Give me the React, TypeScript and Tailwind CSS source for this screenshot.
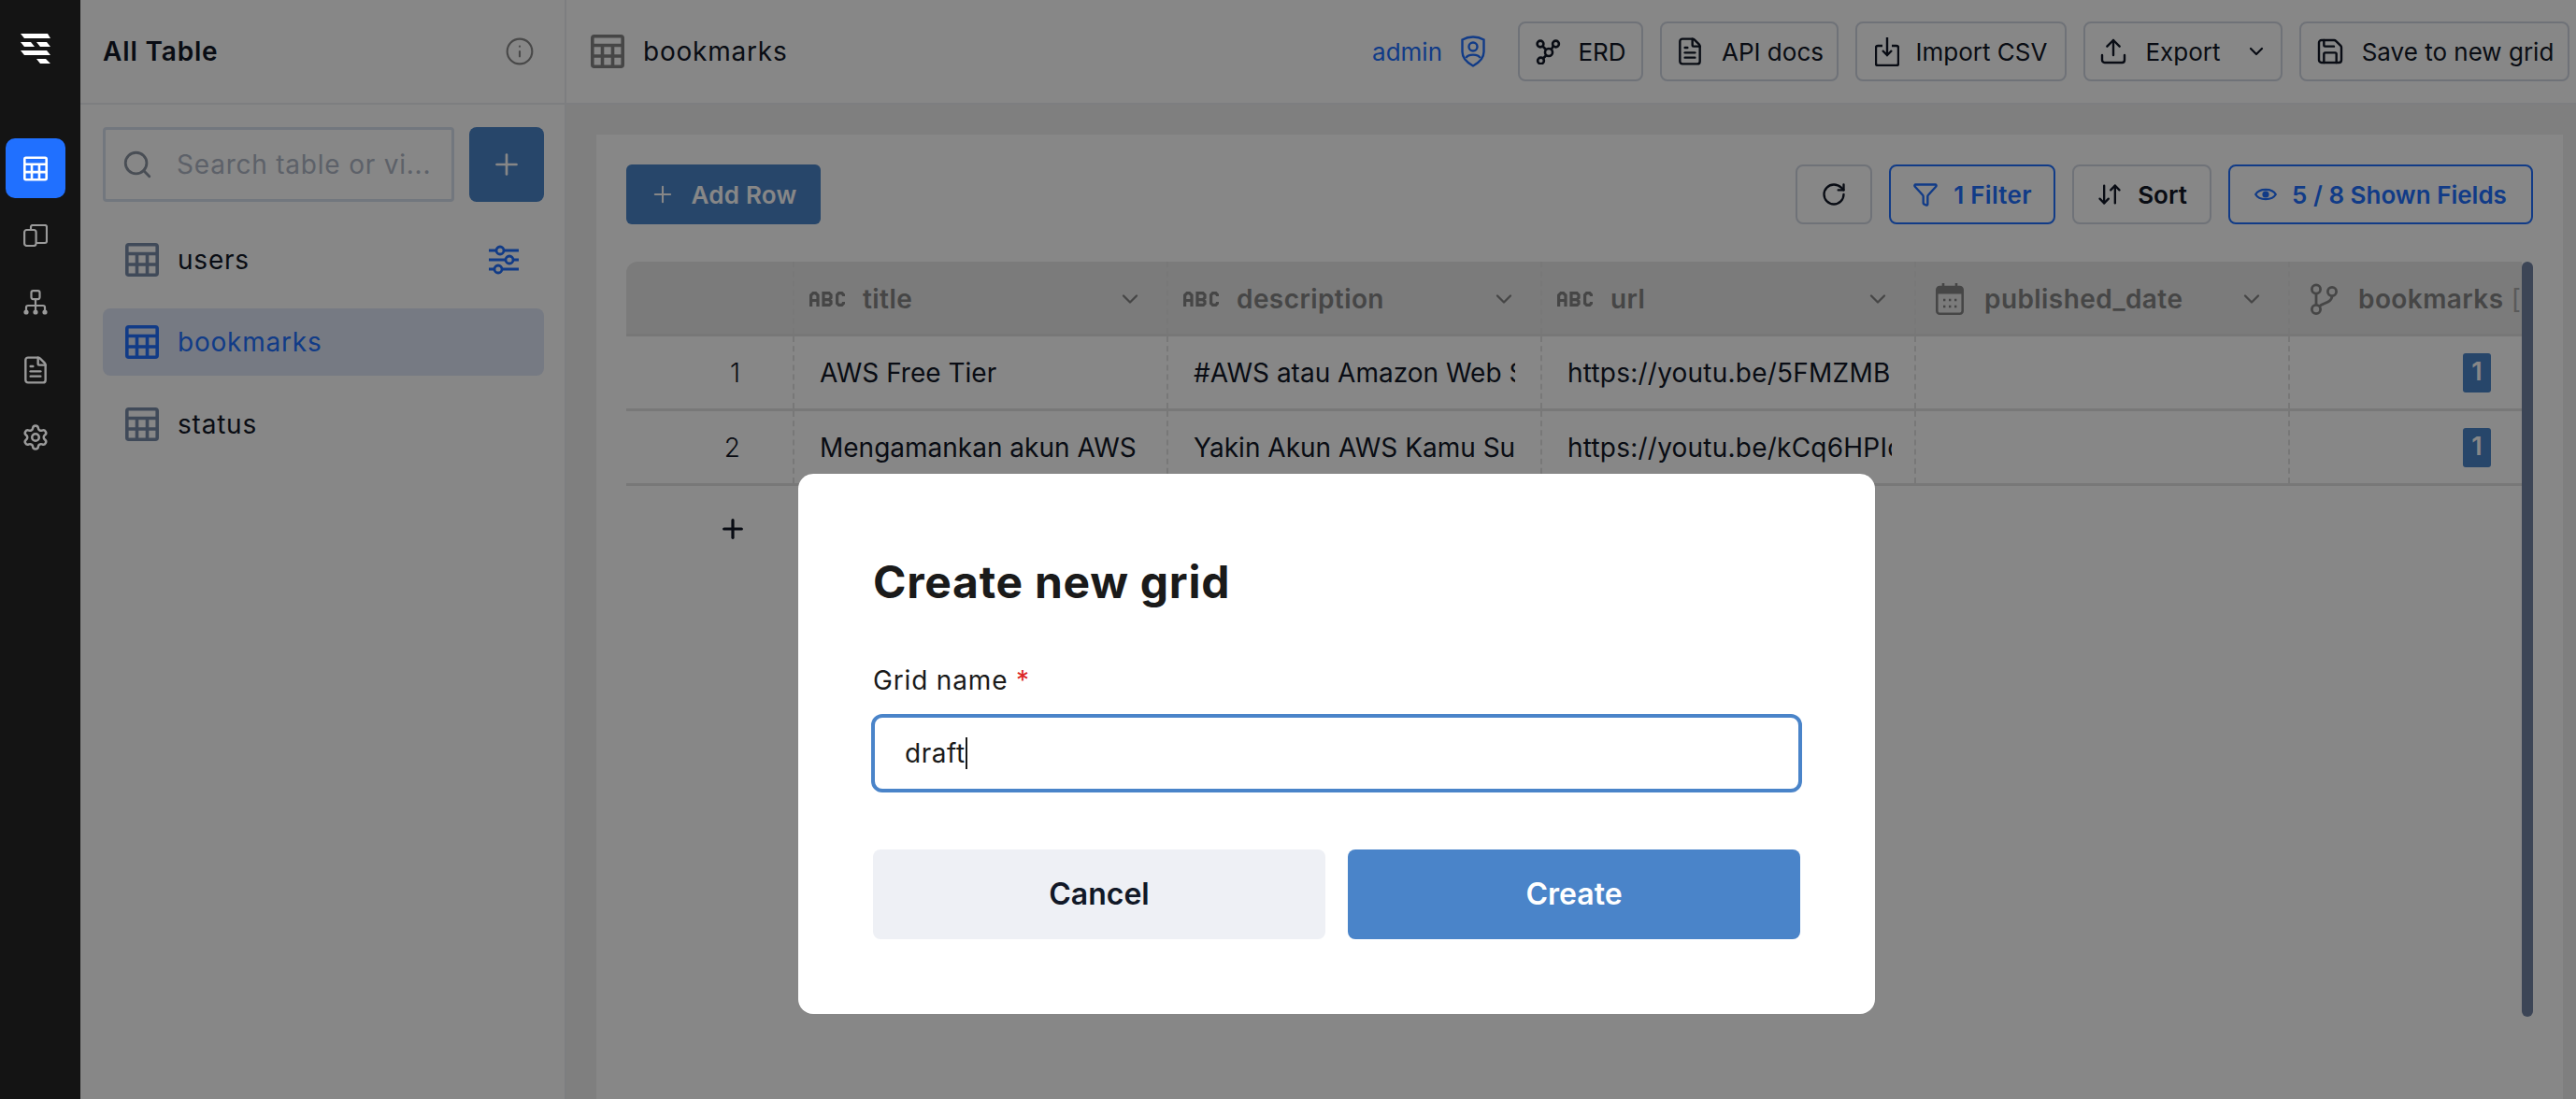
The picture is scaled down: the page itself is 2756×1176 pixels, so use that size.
import React from 'react';
import { ArrowDownUp, ChevronDown, FileText, Filter, Info, Plus, RotateCw, Save, Search, Settings, Upload } from 'lucide-react';

const FONT = 'font-[Inter,"Liberation_Sans",sans-serif]';

function TableGlyph({ className }: { className?: string }) {
  return (
    <svg viewBox="0 0 36 36" className={className} fill="none" stroke="currentColor" strokeWidth="3.6">
      <rect x="1.8" y="1.8" width="32.4" height="32.4" rx="2" />
      <path d="M1.8 11.500h32.4M1.800 23h32.400M12.500 11.500v23M23.500 11.500v23" />
    </svg>
  );
}

function LogoGlyph() {
  return (
    <svg viewBox="22 36 32 32" className="w-8 h-8" fill="white">
      <path d="M22 36H51L54 41H26ZM22 45H33L37 50H26ZM39 45H50L54 50H43ZM22 54H50L54 59H26ZM39 63H49L54 68H43Z" />
    </svg>
  );
}

function PagesGlyph() {
  return (
    <svg viewBox="0 0 26 24" className="w-[26px] h-6" fill="none" stroke="currentColor" strokeWidth="2.2">
      <rect x="1.1" y="6" width="12.5" height="17" rx="2.5" />
      <path d="M8 6V3a2 2 0 0 1 2-2h13a2 2 0 0 1 2 2v15a2 2 0 0 1-2 2h-9.4" />
    </svg>
  );
}

function TreeGlyph() {
  return (
    <svg viewBox="0 0 26 28" className="w-[26px] h-7" fill="none" stroke="currentColor" strokeWidth="2.2">
      <rect x="8.5" y="1.1" width="9" height="9" rx="2" />
      <path d="M13 10v13M3 23v-4a2 2 0 0 1 2-2h16a2 2 0 0 1 2 2v4" />
      <circle cx="3" cy="24" r="2.6" fill="currentColor" stroke="none" />
      <circle cx="13" cy="24" r="2.6" fill="currentColor" stroke="none" />
      <circle cx="23" cy="24" r="2.6" fill="currentColor" stroke="none" />
    </svg>
  );
}

function AbcGlyph() {
  return (
    <svg viewBox="0 0 38 16" className="w-[38px] h-4 shrink-0" fill="none" stroke="currentColor" strokeWidth="3.2">
      <path d="M1.6 16V4l2.4-2.4h2.6L9 4v12M1.6 9.5H9" />
      <path d="M15 1.6h6l2 2v3l-2 2h-5M15 8.5h6l2 2v2.4l-1.6 1.5H15M15 0v16" />
      <path d="M36.5 5V3.6l-1.8-2h-3.2L29.6 3.6v9l1.9 1.8h3.2l1.8-1.8V11" />
    </svg>
  );
}

function CalendarGlyph() {
  return (
    <svg viewBox="0 0 30 34" className="w-[30px] h-[34px] ml-[5px] mr-[3px] shrink-0" fill="none" stroke="currentColor" strokeWidth="2.6">
      <path d="M8 0v5M22 0v5" />
      <rect x="1.3" y="4" width="27.4" height="28.7" rx="3" />
      <path d="M1.3 8h27.4" strokeWidth="7" />
      <path d="M8 18h2.4M14 18h2.4M20 18h2.4M8 25h2.4M14 25h2.4M20 25h2.4" strokeWidth="2.4" />
    </svg>
  );
}

function BranchGlyph() {
  return (
    <svg viewBox="0 0 30 34" className="w-[30px] h-[34px] ml-[5px] mr-[3px] shrink-0" fill="none" stroke="currentColor" strokeWidth="2.8">
      <circle cx="7" cy="6.5" r="4.6" />
      <circle cx="24" cy="9" r="4.6" />
      <circle cx="7" cy="28" r="4.6" />
      <path d="M7 11v12.4M24 13.6c0 7-9 7.5-13.5 11" />
    </svg>
  );
}

function SlidersGlyph() {
  return (
    <svg viewBox="0 0 34 32" className="w-[34px] h-8 text-[#2070ff]" fill="none" stroke="currentColor" strokeWidth="2.8">
      <path d="M1 6h8M17 6h16M1 16h18M27 16h6M1 26h6M15 26h18" />
      <circle cx="13" cy="6" r="4" />
      <circle cx="23" cy="16" r="4" />
      <circle cx="11" cy="26" r="4" />
    </svg>
  );
}

function ShieldGlyph() {
  return (
    <svg viewBox="0 0 26 34" className="ml-5 mr-[35px] w-[26px] h-[34px] text-[#2070ff]" fill="none" stroke="currentColor" strokeWidth="2.4">
      <path d="M13 1.5c4 0 8 1 11.5 3v13c0 7-6 12-11.5 15C7.500 29.500 1.500 24.500 1.500 17.500v-13c3.500-2 7.500-3 11.500-3Z" />
      <circle cx="13" cy="12" r="4.500" />
      <path d="M5.500 24c2-4.500 13-4.500 15 0" />
    </svg>
  );
}

function ErdGlyph() {
  return (
    <svg viewBox="0 0 28 28" className="w-7 h-7" fill="none" stroke="currentColor" strokeWidth="2.6">
      <circle cx="6" cy="6" r="3.400" />
      <circle cx="22.500" cy="6" r="3.400" />
      <circle cx="6.500" cy="24" r="3.400" />
      <circle cx="15" cy="15" r="4" />
      <path d="M8.500 8.500l3.500 3.500M19.800 8l-2 4M9 21.500l3.500-3.500" />
    </svg>
  );
}

function ImportGlyph() {
  return (
    <svg viewBox="0 0 26 32" className="w-[26px] h-8" fill="none" stroke="currentColor" strokeWidth="2.4">
      <path d="M8 10H3a2 2 0 0 0-2 2v17a2 2 0 0 0 2 2h20a2 2 0 0 0 2-2V12a2 2 0 0 0-2-2h-5" />
      <path d="M13 1v19M8 15l5 5 5-5" />
    </svg>
  );
}

function EyeGlyph() {
  return (
    <svg viewBox="0 0 24 16" className="w-6 h-4" fill="none" stroke="currentColor" strokeWidth="2.2">
      <path d="M1.200 8C5 1.200 19 1.200 22.800 8 19 14.800 5 14.800 1.200 8Z" />
      <circle cx="12" cy="8" r="3.600" fill="currentColor" stroke="none" />
    </svg>
  );
}

function HeaderButton({ icon, label, width, chevron }: { icon: React.ReactNode; label: string; width: string; chevron?: boolean }) {
  return (
    <button className={`${width} h-16 flex items-center justify-center gap-[18px] border-2 border-[#d2d8e2] rounded-[8px] text-[26px] text-[#111827] whitespace-nowrap`}>
      {icon}
      <span>{label}</span>
      {chevron && <ChevronDown className="w-6 h-6 ml-2" strokeWidth={2.2} />}
    </button>
  );
}

function HeaderCell({ icon, label, chevron = true, last }: { icon: React.ReactNode; label: string; chevron?: boolean; last?: boolean }) {
  return (
    <div className={`${last ? 'flex-1 min-w-0' : 'w-[400px] shrink-0 border-r-2 border-dashed border-[#e2e2e2]'} h-full pl-4 pr-[25px] pt-[2px] flex items-center gap-[19px] overflow-hidden`}>
      {icon}
      <span className="flex-1 text-[28px] tracking-[0.015em] font-semibold text-[#858585] whitespace-nowrap">
        {label}
        {last && <span className="font-normal text-[#aaaaaa]"> [status]</span>}
      </span>
      {chevron && <ChevronDown className="w-7 h-7 text-[#858585] shrink-0" strokeWidth={2} />}
    </div>
  );
}

function Row({ no, title, description, url }: { no: number; title: string; description: string; url: string }) {
  return (
    <div className="flex h-20 border-b-[3px] border-[#e2e2e2]">
      <div className="w-[180px] shrink-0 pr-[56px] flex items-center justify-end text-[28px] font-light text-[#111827] border-r-2 border-dashed border-[#e2e2e2]">{no}</div>
      {[title, description].map((text) => (
        <div key={text} className="w-[400px] shrink-0 px-[27px] flex items-center border-r-2 border-dashed border-[#e2e2e2]">
          <span className="block overflow-hidden whitespace-nowrap text-[28px] text-[#111827]">{text}</span>
        </div>
      ))}
      <div className="w-[400px] shrink-0 pl-[27px] pr-[24px] flex items-center border-r-2 border-dashed border-[#e2e2e2]">
        <span className="block overflow-hidden whitespace-nowrap text-[28px] tracking-[0.008em] text-[#111827]">{url}</span>
      </div>
      <div className="w-[400px] shrink-0 border-r-2 border-dashed border-[#e2e2e2]" />
      <div className="flex-1 min-w-0 pr-[33px] flex items-center justify-end">
        <span className="w-[30px] h-[42px] rounded-[3px] bg-[#4a84c9] text-white text-[27px] font-semibold flex items-center justify-center">1</span>
      </div>
    </div>
  );
}

export default function App() {
  return (
    <div className={`${FONT} relative w-[2756px] h-[1176px] overflow-hidden flex bg-white text-[#111827]`}>
      <aside className="relative z-20 w-[86px] shrink-0 bg-[#141414] flex flex-col pl-[6px]">
        <div className="w-16 mt-9 mb-20 flex justify-center">
          <LogoGlyph />
        </div>
        <div className="flex flex-col gap-2 text-[#9a9a9a]">
          <div className="w-16 h-16 rounded-[10px] bg-[#2070ff] flex items-center justify-center text-white">
            <TableGlyph className="w-[26px] h-[27px]" />
          </div>
          <div className="w-16 h-16 flex items-center justify-center"><PagesGlyph /></div>
          <div className="w-16 h-16 flex items-center justify-center"><TreeGlyph /></div>
          <div className="w-16 h-16 flex items-center justify-center"><FileText className="w-8 h-8" strokeWidth={1.800} /></div>
          <div className="w-16 h-16 flex items-center justify-center"><Settings className="w-[30px] h-[30px]" strokeWidth={2} /></div>
        </div>
      </aside>

      <section className="w-[520px] shrink-0 border-r-2 border-[#eceef2] flex flex-col">
        <div className="h-[112px] shrink-0 px-6 border-b-2 border-[#eceef2] flex items-center justify-between">
          <h2 className="text-[28px] tracking-[0.03em] font-semibold">All Table</h2>
          <Info className="w-8 h-8 mr-[8px] text-[#8a8a8a]" strokeWidth={1.600} />
        </div>
        <div className="pl-6 pr-[22px] pt-6 flex flex-col">
          <div className="flex gap-4">
            <div className="w-[376px] h-20 shrink-0 border-[3px] border-[#d8e0ee] rounded-[4px] pl-[17px] flex items-center gap-[25px]">
              <Search className="w-[34px] h-[34px] shrink-0 text-[#8a93a0]" strokeWidth={2} />
              <span className="text-[28px] tracking-[0.028em] text-[#b0b8c6] whitespace-nowrap">Search table or vi...</span>
            </div>
            <button className="w-20 h-20 shrink-0 rounded-[8px] bg-[#4a84c9] text-white flex items-center justify-center">
              <Plus className="w-9 h-9" strokeWidth={1.800} />
            </button>
          </div>
          <div className="mt-[26px] flex flex-col gap-4">
            <div className="h-[72px] pl-6 pr-[26px] flex items-center gap-5">
              <TableGlyph className="w-9 h-9 text-[#7a8ca8]" />
              <span className="flex-1 text-[28px] tracking-[0.028em]">users</span>
              <SlidersGlyph />
            </div>
            <div className="h-[72px] px-6 flex items-center gap-5 rounded-[8px] bg-[#dfe7f7]">
              <TableGlyph className="w-9 h-9 text-[#2070ff]" />
              <span className="text-[28px] tracking-[0.028em] text-[#2070ff]">bookmarks</span>
            </div>
            <div className="h-[72px] px-6 flex items-center gap-5">
              <TableGlyph className="w-9 h-9 text-[#7a8ca8]" />
              <span className="text-[28px] tracking-[0.028em]">status</span>
            </div>
          </div>
        </div>
      </section>

      <main className="flex-1 min-w-0 flex flex-col">
        <header className="h-[112px] shrink-0 border-b-2 border-[#eceef2] pl-[26px] pr-[7px] flex items-center">
          <TableGlyph className="w-9 h-9 text-[#848484]" />
          <span className="ml-5 text-[28px] tracking-[0.028em]">bookmarks</span>
          <span className="ml-auto text-[26px] text-[#2070ff]">admin</span>
          <ShieldGlyph />
          <div className="flex gap-[18px]">
            <HeaderButton width="w-[134px]" icon={<ErdGlyph />} label="ERD" />
            <HeaderButton width="w-[191px]" icon={<FileText className="w-8 h-8" strokeWidth={1.800} />} label="API docs" />
            <HeaderButton width="w-[226px]" icon={<ImportGlyph />} label="Import CSV" />
            <HeaderButton width="w-[213px]" icon={<Upload className="w-8 h-8" strokeWidth={1.800} />} label="Export" chevron />
            <HeaderButton width="w-[289px]" icon={<Save className="w-8 h-8" strokeWidth={1.800} />} label="Save to new grid" />
          </div>
        </header>

        <div className="flex-1 min-h-0 bg-[#f0f0f0] pl-[32px] pr-[14px] pt-[32px]">
          <div className="h-full bg-white px-8 pt-8 flex flex-col">
            <div className="flex items-center">
              <button className="h-16 w-[208px] rounded-[6px] bg-[#4a84c9] text-white flex items-center justify-center gap-4 text-[26px] tracking-[0.01em] font-semibold">
                <Plus className="w-7 h-7" strokeWidth={1.800} />
                Add Row
              </button>
              <div className="ml-auto flex gap-[18px]">
                <button className="w-[82px] h-16 border-2 border-[#d2d8e2] rounded-[8px] flex items-center justify-center"><RotateCw className="w-7 h-7" strokeWidth={2} /></button>
                <button className="w-[178px] h-16 border-2 border-[#2070ff] rounded-[8px] flex items-center justify-center gap-4 text-[26px] tracking-[0.01em] font-semibold text-[#2070ff]"><Filter className="w-7 h-7" strokeWidth={2} />1 Filter</button>
                <button className="w-[149px] h-16 border-2 border-[#d2d8e2] rounded-[8px] flex items-center justify-center gap-4 text-[26px] font-semibold"><ArrowDownUp className="w-7 h-7" strokeWidth={2} />Sort</button>
                <button className="w-[326px] h-16 border-2 border-[#2070ff] rounded-[8px] flex items-center justify-center gap-4 text-[26px] font-semibold text-[#2070ff]"><EyeGlyph />5 / 8 Shown Fields</button>
              </div>
            </div>

            <div className="mt-10 flex flex-1 min-h-0">
              <div className="flex-1 min-w-0 overflow-hidden">
                <div className="flex h-20 bg-[#e8e8e8] rounded-tl-[12px] border-b-[3px] border-[#e0e0e0] text-[#858585]">
                  <div className="w-[180px] shrink-0 border-r-2 border-dashed border-[#e2e2e2]" />
                  <HeaderCell icon={<AbcGlyph />} label="title" />
                  <HeaderCell icon={<AbcGlyph />} label="description" />
                  <HeaderCell icon={<AbcGlyph />} label="url" />
                  <HeaderCell icon={<CalendarGlyph />} label="published_date" />
                  <HeaderCell icon={<BranchGlyph />} label="bookmarks" chevron={false} last />
                </div>
                <Row no={1} title="AWS Free Tier" description="#AWS atau Amazon Web Services" url="https://youtu.be/5FMZMB" />
                <Row no={2} title="Mengamankan akun AWS" description="Yakin Akun AWS Kamu Sudah Aman" url="https://youtu.be/kCq6HPIc" />
                <div className="w-[180px] pr-[50px] h-[92px] flex items-center justify-end">
                  <Plus className="w-8 h-8 text-[#111827]" strokeWidth={2.400} />
                </div>
              </div>
              <div className="w-3 h-[808px] rounded-full bg-[#7182a2]" />
            </div>
          </div>
        </div>
      </main>

      <div className="absolute inset-y-0 right-0 left-[86px] z-10 bg-black/[.47] pl-[18px] pt-[507px] flex justify-center items-start">
        <div className="w-[1152px] h-[578px] rounded-[16px] bg-white px-20 pt-[88px] flex flex-col">
          <h1 className="text-[48px] leading-[56px] tracking-[0.015em] font-bold text-[#1a1a1a]">Create new grid</h1>
          <label className="mt-[59px] text-[28px] leading-[36px] tracking-[0.03em] text-[#1a1a1a]">
            Grid name <span className="text-[#dc2626]">*</span>
          </label>
          <div className="mt-[18px] -mx-[2px] h-[84px] shrink-0 rounded-[12px] border-[4px] border-[#4a84c9] px-8 flex items-center text-[28px] tracking-[0.02em] text-[#1a1a1a]">
            draft<span className="w-[2px] h-[34px] bg-[#1a1a1a]" />
          </div>
          <div className="mt-[61px] flex gap-6">
            <button className="flex-1 h-24 rounded-[8px] bg-[#eef0f5] text-[32px] font-semibold text-[#111827]">Cancel</button>
            <button className="flex-1 h-24 rounded-[8px] bg-[#4a84c9] text-[32px] font-semibold text-white">Create</button>
          </div>
        </div>
      </div>
    </div>
  );
}
